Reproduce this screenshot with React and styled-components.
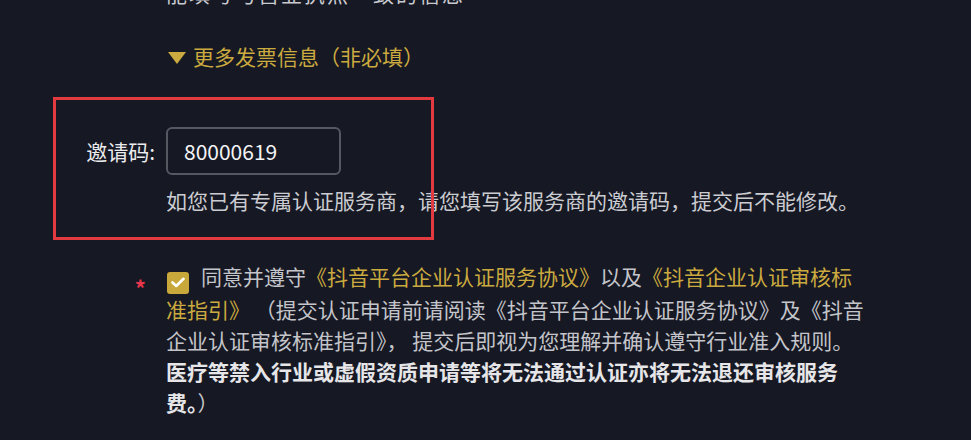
import React from "react";
import styled, { createGlobalStyle } from "styled-components";

const GlobalStyle = createGlobalStyle`
  html, body {
    margin: 0;
    padding: 0;
    background: #161823;
  }
  body {
    font-family: "Noto Sans CJK SC", "Microsoft YaHei", sans-serif;
    overflow: hidden;
  }
`;

const GOLD = "#cbaa3f";

const Page = styled.div`
  position: relative;
  width: 971px;
  height: 440px;
  overflow: hidden;
  display: grid;
  grid-template-columns: 166px 702px;
  align-content: start;
  font-size: 21px;
  line-height: 31px;
  color: #c4c5ca;
`;

const Cell = styled.div`
  grid-column: 2;
  margin-top: ${(p) => p.$top || 0}px;
`;

const CutLine = styled(Cell)`
  color: #c9cacf;
  letter-spacing: 2px;
`;

const Toggle = styled(Cell)`
  display: flex;
  align-items: center;
  gap: 7px;
  color: ${GOLD};
  padding-left: 2px;
`;

const Triangle = styled.span`
  width: 0;
  height: 0;
  border-left: 9px solid transparent;
  border-right: 9px solid transparent;
  border-top: 12px solid ${GOLD};
  margin-top: 2px;
`;

const Label = styled.label`
  grid-column: 1;
  margin-top: ${(p) => p.$top || 0}px;
  text-align: right;
  padding-right: 11px;
  color: #ececee;
  align-self: center;
`;

const Input = styled.input`
  box-sizing: border-box;
  width: 175px;
  height: 48px;
  margin: 0;
  padding: 0 16px;
  background: #161823;
  border: 2px solid #565861;
  border-radius: 6px;
  font-family: inherit;
  font-size: 21px;
  color: #f4f4f6;
  outline: none;
`;

const Hint = styled(Cell)`
  color: #cbccd1;
`;

const Star = styled.span`
  grid-column: 1;
  margin-top: ${(p) => p.$top || 0}px;
  text-align: right;
  padding-right: 20px;
  padding-top: 15px;
  color: #e8364c;
  font-size: 22px;
  line-height: 22px;
  font-weight: 700;
`;

const Agreement = styled(Cell)`
  text-align: left;
`;

const Check = styled.span`
  display: inline-flex;
  align-items: center;
  justify-content: center;
  width: 22px;
  height: 22px;
  border-radius: 3px;
  background: #c8a83a;
  vertical-align: -3px;
  margin-right: 12px;
  margin-left: 1px;
`;

const Link = styled.span`
  color: ${GOLD};
`;

const Strong = styled.b`
  font-weight: 700;
  color: #e6e6e9;
`;

const Annotation = styled.div`
  position: absolute;
  left: 53px;
  top: 97px;
  width: 381px;
  height: 143px;
  box-sizing: border-box;
  border: 3px solid #e23a3e;
  pointer-events: none;
`;

export default function App() {
  return (
    <>
      <GlobalStyle />
      <Page>
        <CutLine $top={-22}>能填写与营业执照一致的信息</CutLine>
        <Toggle $top={32}>
          <Triangle />
          更多发票信息（非必填）
        </Toggle>
        <Label $top={55}>邀请码:</Label>
        <Cell $top={55}>
          <Input defaultValue="80000619" />
        </Cell>
        <Hint $top={10}>
          如您已有专属认证服务商，请您填写该服务商的邀请码，提交后不能修改。
        </Hint>
        <Star $top={45}>*</Star>
        <Agreement $top={45}>
          <Check>
            <svg width="14" height="11" viewBox="0 0 14 11">
              <polyline
                points="1.5,5.5 5.2,9 12.5,1.8"
                fill="none"
                stroke="#fff"
                strokeWidth="2.6"
                strokeLinecap="round"
                strokeLinejoin="round"
              />
            </svg>
          </Check>
          同意并遵守<Link>《抖音平台企业认证服务协议》</Link>以及
          <Link>《抖音企业认证审核标准指引》</Link> （提交认证申请前请阅读《抖音平台企业认证服务协议》及《抖音企业认证审核标准指引》，
          提交后即视为您理解并确认遵守行业准入规则。
          <Strong>医疗等禁入行业或虚假资质申请等将无法通过认证亦将无法退还审核服务费。</Strong>）
        </Agreement>
        <Annotation />
      </Page>
    </>
  );
}
